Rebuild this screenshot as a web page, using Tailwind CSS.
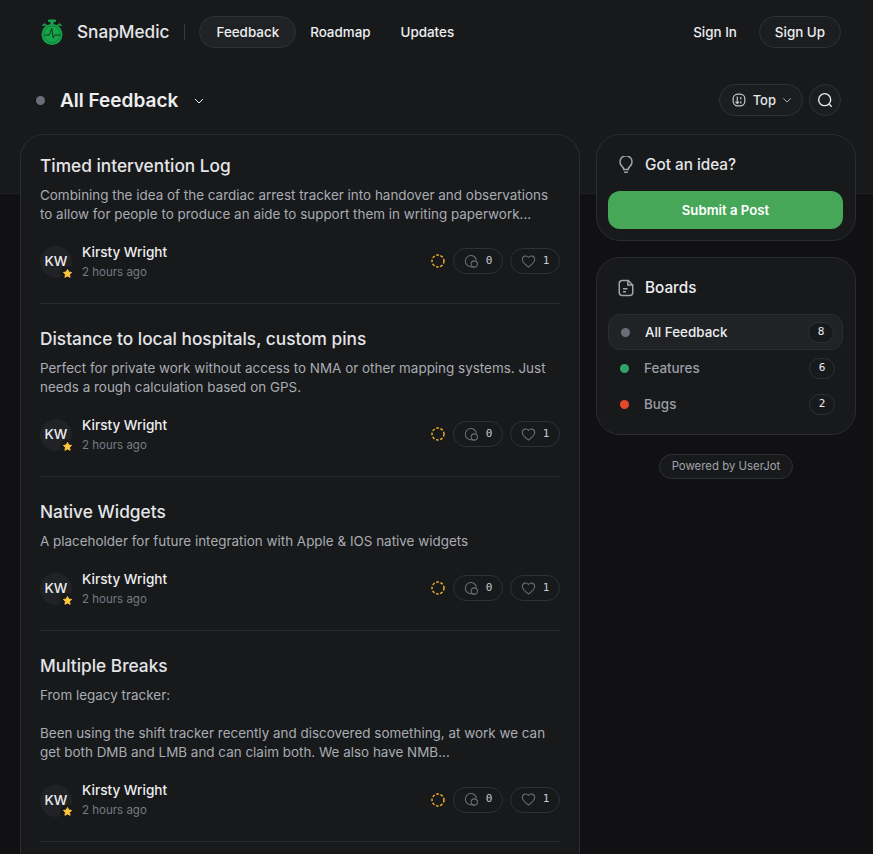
<!DOCTYPE html>
<html lang="en">
  <head>
    <meta charset="UTF-8" />
    <meta name="viewport" content="width=device-width, initial-scale=1.0" />
    <title>SnapMedic - Feedback</title>
    <script src="https://cdn.jsdelivr.net/npm/@tailwindcss/browser@4"></script>
  </head>
  <body class="bg-[#111113] font-[Inter,sans-serif] text-[#edeef0] h-[854px] overflow-hidden">
    <!-- Top band -->
    <div class="bg-[#18191b] h-[194px] border-b border-[#212225] -mb-[194px]"></div>

    <div class="relative pl-5 pr-[17px]">
      <!-- Header -->
      <header class="flex items-center justify-between h-16 pl-5 pr-[15px]">
        <div class="flex items-center">
          <svg class="w-6 h-7 mr-[13px]" viewBox="0 0 24 28" fill="none">
            <rect x="8" y="1.500" width="8" height="2.500" rx="1" fill="#16a34a" />
            <rect x="10.500" y="3" width="3" height="4" fill="#16a34a" />
            <path d="M2.500 8l2 -2 2 2M21.500 8l-2 -2 -2 2" stroke="#16a34a" stroke-width="1.500" />
            <circle cx="12" cy="16.500" r="10.500" fill="#16a34a" />
            <circle cx="12" cy="16.500" r="8.500" fill="none" stroke="#0f7a37" stroke-width="0.800" />
            <path d="M4 17h5l1.200 -2 1.500 -5 1.500 10 1.200 -3h6" stroke="#0b3d1e" stroke-width="1" />
          </svg>
          <span class="text-[17.200px] font-medium text-[#e4e5e8]">SnapMedic</span>
          <span class="w-px h-4 bg-[#363a3f] ml-[15px] mr-[14px]"></span>
          <nav class="flex items-center text-[13.400px] font-medium">
            <a class="h-8 px-4 flex items-center rounded-full border border-[#2e3135] bg-[#212225]">Feedback</a>
            <a class="h-8 pl-[14px] pr-[15px] flex items-center">Roadmap</a>
            <a class="h-8 px-[15px] flex items-center">Updates</a>
          </nav>
        </div>
        <div class="flex items-center text-[13.400px] font-medium">
          <a class="mr-[22px]">Sign In</a>
          <a class="h-8 px-[15px] flex items-center rounded-full border border-[#2e3135] bg-[#1c1d20]">Sign Up</a>
        </div>
      </header>

      <!-- Board title row -->
      <div class="flex items-center justify-between h-8 mt-5 pl-4 pr-[15px]">
        <div class="flex items-center">
          <span class="w-[9px] h-[9px] rounded-full bg-[#696e77] mr-[15px]"></span>
          <h1 class="text-[19px] font-semibold mt-[2px]">All Feedback</h1>
          <svg class="w-3 h-3 ml-[15px] mt-[2px]" viewBox="0 0 24 24" fill="none" stroke="#edeef0" stroke-width="2"><path d="M4 8l8 8 8 -8" /></svg>
        </div>
        <div class="flex items-center gap-[6px]">
          <button class="h-8 pl-3 pr-[10px] flex items-center rounded-full border border-[#2e3135] bg-[#1c1d20] text-[13px] font-medium text-[#e4e5e8]">
            <svg class="w-[14px] h-[14px] mr-[7px]" viewBox="0 0 24 24" fill="none" stroke="#c6c9ce" stroke-width="2"><rect x="2" y="2" width="20" height="20" rx="8" /><path d="M9 6v12M6 15l3 3 3 -3M15 7v4M15 14v4" /></svg>
            <span class="mt-[2px]">Top</span>
            <svg class="w-[10px] h-[10px] ml-[6px]" viewBox="0 0 24 24" fill="none" stroke="#c6c9ce" stroke-width="2"><path d="M3 8l9 9 9 -9" /></svg>
          </button>
          <button class="w-8 h-8 flex items-center justify-center rounded-full border border-[#2e3135] bg-[#1c1d20]">
            <svg class="w-4 h-4" viewBox="0 0 24 24" fill="none" stroke="#edeef0" stroke-width="2"><circle cx="11.500" cy="11.500" r="9" /><path d="M18.500 18.500l3.500 3.500" /></svg>
          </button>
        </div>
      </div>

      <!-- Main columns -->
      <div class="flex items-start gap-4 mt-[18px]">
        <main id="posts" class="w-[560px] rounded-t-[24px] border border-[#2a2c30] bg-[#18191b] px-[19px] pt-[19px] h-[900px]"></main>

        <aside class="w-[260px]">
          <div class="rounded-[24px] border border-[#2a2c30] bg-[#18191b] pl-[11px] pr-3 pb-[11px] pt-4">
            <div class="flex items-center h-7 pl-[9px]">
              <svg class="w-[18px] h-[18px] mr-[10px]" viewBox="0 0 24 24" fill="none" stroke="#a0a4ab" stroke-width="2"><path d="M9 18c0 -2 -1 -3 -2.500 -4.500A8 8 0 1 1 17.500 13.500C16 15 15 16 15 18zM9.500 21.500h5" /></svg>
              <span class="text-[15.300px] font-medium text-[#e4e5e8]">Got an idea?</span>
            </div>
            <button class="mt-[12px] w-full h-[38px] pt-[2px] rounded-[12px] bg-[#46a758] text-[13.200px] font-semibold text-white">Submit a Post</button>
          </div>

          <div class="mt-4 rounded-[24px] border border-[#2a2c30] bg-[#18191b] pl-[11px] pr-3 pb-3 pt-4">
            <div class="flex items-center h-7 pl-[9px]">
              <svg class="w-[18px] h-[18px] mr-[10px]" viewBox="0 0 24 24" fill="none" stroke="#a0a4ab" stroke-width="2"><path d="M7 2h8l6 6v10a4 4 0 0 1 -4 4H7a4 4 0 0 1 -4 -4V6a4 4 0 0 1 4 -4zM14.500 2v6h6.500M8 13h6M8 17h4" /></svg>
              <span class="text-[15.300px] font-medium">Boards</span>
            </div>
            <div class="mt-3 text-[13.400px] font-medium">
              <div class="flex items-center h-9 pl-3 pr-2 rounded-[12px] border border-[#2a2c30] bg-[#212225]">
                <span class="w-[9px] h-[9px] rounded-full bg-[#696e77] mr-[15px]"></span>
                <span class="grow">All Feedback</span>
                <span class="w-[26px] h-[21px] flex items-center justify-center rounded-full border border-[#2e3135] bg-[#18191b] font-[DejaVu_Sans_Mono,monospace] font-normal text-[11px]">8</span>
              </div>
              <div class="flex items-center h-9 pl-3 pr-2 text-[#9a9ea6]">
                <span class="w-[9px] h-[9px] rounded-full bg-[#30a46c] mr-[15px]"></span>
                <span class="grow">Features</span>
                <span class="w-[26px] h-[21px] flex items-center justify-center rounded-full border border-[#2e3135] bg-[#18191b] font-[DejaVu_Sans_Mono,monospace] font-normal text-[11px] text-[#edeef0]">6</span>
              </div>
              <div class="flex items-center h-9 pl-3 pr-2 text-[#9a9ea6]">
                <span class="w-[9px] h-[9px] rounded-full bg-[#e5482d] mr-[15px]"></span>
                <span class="grow">Bugs</span>
                <span class="w-[26px] h-[21px] flex items-center justify-center rounded-full border border-[#2e3135] bg-[#18191b] font-[DejaVu_Sans_Mono,monospace] font-normal text-[11px] text-[#edeef0]">2</span>
              </div>
            </div>
          </div>

          <div class="flex justify-center mt-[19px]">
            <a class="h-[25px] px-3 flex items-center rounded-full border border-[#2e3135] bg-[#18191b] text-[11.400px] text-[#a0a4ab]">Powered by UserJot</a>
          </div>
        </aside>
      </div>
    </div>

    <!-- Script -->
    <script>
      const posts = [
        {
          title: "Timed intervention Log",
          body: "Combining the idea of the cardiac arrest tracker into handover and observations<br />to allow for people to produce an aide to support them in writing paperwork...",
        },
        {
          title: "Distance to local hospitals, custom pins",
          body: "Perfect for private work without access to NMA or other mapping systems. Just<br />needs a rough calculation based on GPS.",
        },
        {
          title: "Native Widgets",
          body: "A placeholder for future integration with Apple &amp; IOS native widgets",
        },
        {
          title: "Multiple Breaks",
          body: "From legacy tracker:<br /><br />Been using the shift tracker recently and discovered something, at work we can<br />get both DMB and LMB and can claim both. We also have NMB...",
        },
      ];

      document.getElementById("posts").innerHTML = posts
        .map(
          (p) => `
        <article class="border-b border-[#2a2c30] pb-[20px] mb-[23px] last:mb-0">
          <h2 class="text-[17.300px] leading-6 font-medium text-[#e4e5e8]">${p.title}</h2>
          <p class="mt-[7.800px] text-[13.450px] leading-[19.250px] text-[#a8acb3]">${p.body}</p>
          <div class="flex items-center justify-between mt-[17.700px]">
            <div class="flex items-center">
              <div class="relative w-8 h-8 pb-[2px] rounded-full bg-[#212225] flex items-center justify-center text-[13.500px] font-medium mr-[10px]">
                KW
                <span class="absolute -right-[2px] -bottom-[2px] w-[14px] h-[14px] rounded-full bg-[#18191b] flex items-center justify-center">
                  <svg class="w-[11px] h-[11px]" viewBox="0 0 24 24" fill="#ffc53d" stroke="#ffc53d" stroke-width="2" stroke-linejoin="round"><path d="M12 3l2.800 5.800 6.200 .9 -4.500 4.400 1.100 6.300 -5.600 -3 -5.600 3 1.100 -6.300 -4.500 -4.400 6.200 -.9z" /></svg>
                </span>
              </div>
              <div>
                <div class="text-[13.600px] leading-5 font-medium">Kirsty Wright</div>
                <div class="text-[11.500px] leading-[21px] text-[#777b84]">2 hours ago</div>
              </div>
            </div>
            <div class="flex items-center mb-[2px]">
              <svg class="w-[14px] h-[14px] mr-[8px]" viewBox="0 0 14 14" fill="none" stroke="#f5b52a" stroke-width="1.400" stroke-dasharray="2.600 1.700"><circle cx="7" cy="7" r="6" /></svg>
              <span class="h-[26px] w-[50px] flex items-center justify-center rounded-full border border-[#2e3135] font-[DejaVu_Sans_Mono,monospace] text-[11px] text-[#c6c9ce] mr-[7px]">
                <svg class="w-[15px] h-[15px] mr-[7px]" viewBox="0 0 24 24" fill="none" stroke="#696e77" stroke-width="1.700"><path d="M11 20.500A9 9 0 1 1 20 10" /><circle cx="16.500" cy="16" r="5" /><path d="M11 20.500h5.500" /></svg>0
              </span>
              <span class="h-[26px] w-[50px] flex items-center justify-center rounded-full border border-[#2e3135] font-[DejaVu_Sans_Mono,monospace] text-[11px] text-[#c6c9ce]">
                <svg class="w-[15px] h-[15px] mr-[7px]" viewBox="0 0 24 24" fill="none" stroke="#696e77" stroke-width="1.700"><path d="M12 21C5 16 2 12.500 2 8.500A5.500 5.500 0 0 1 12 5.500 5.500 5.500 0 0 1 22 8.500C22 12.500 19 16 12 21z" /></svg>1
              </span>
            </div>
          </div>
        </article>`
        )
        .join("");
    </script>
  </body>
</html>
